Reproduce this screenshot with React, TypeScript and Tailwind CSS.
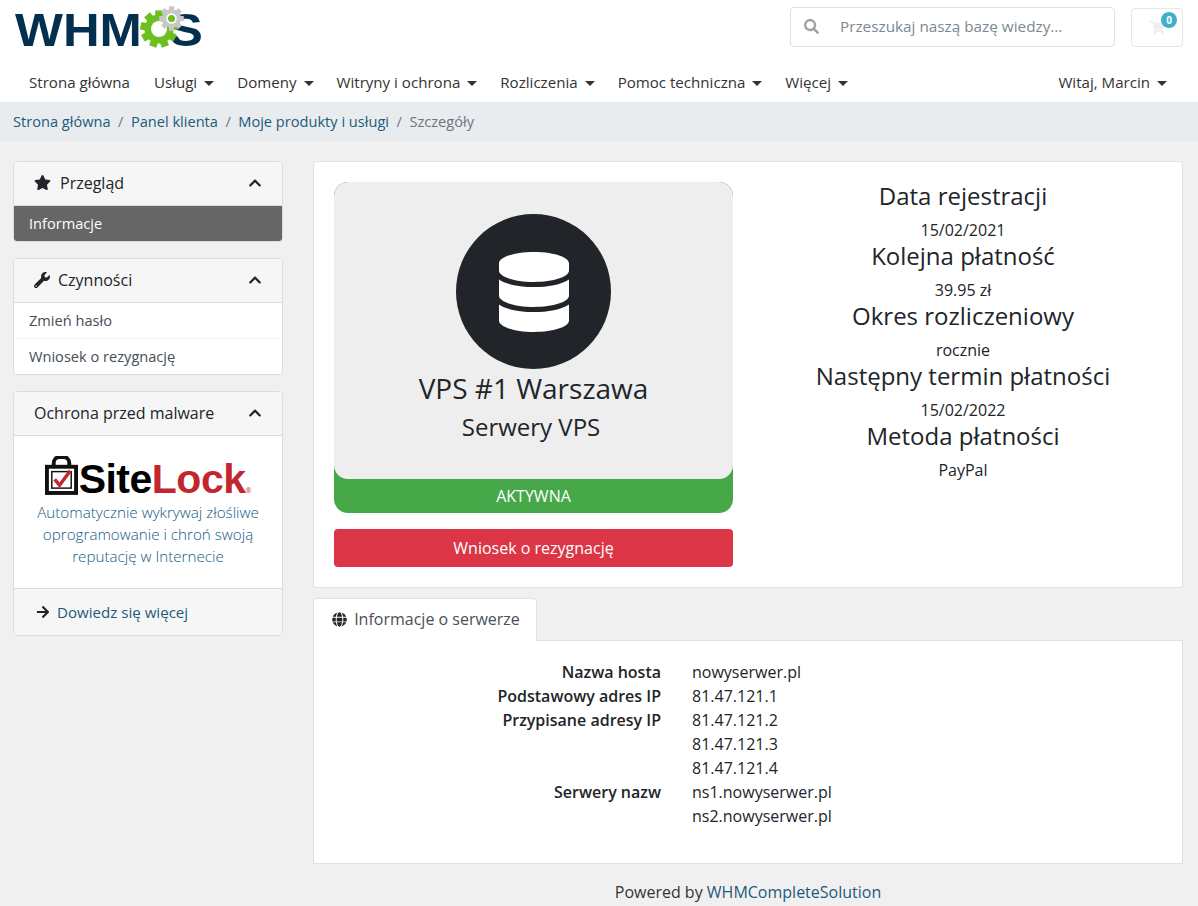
import React from "react";
import { FaStar, FaWrench, FaChevronUp, FaArrowRight, FaGlobe, FaDatabase, FaSearch, FaShoppingCart } from "react-icons/fa";

const font = { fontFamily: '"Open Sans", sans-serif' };

function Gear({ size, color, hole, teeth, className }: { size: number; color: string; hole: string; teeth: number; className?: string }) {
  const items = Array.from({ length: teeth }, (_, i) => (360 / teeth) * i);
  return (
    <svg width={size} height={size} viewBox="0 0 100 100" className={className}>
      {items.map((a) => (
        <rect key={a} x="40" y="1" width="20" height="26" fill={color} transform={`rotate(${a} 50 50)`} />
      ))}
      <circle cx="50" cy="50" r="38" fill={color} />
      <circle cx="50" cy="50" r="21" fill={hole} />
    </svg>
  );
}

function Logo() {
  return (
    <div className="relative h-[46px] w-[190px] mb-[7px] text-[#04304f] leading-none">
      <div className="flex items-center h-[46px] w-[174px] font-['Liberation_Sans'] text-[47px] font-bold scale-x-[1.08] origin-left">
        <span>WHM</span>
        <span className="ml-auto">S</span>
      </div>
      <Gear size={38} color="#6cbf1e" hole="#fff" teeth={9} className="absolute left-[125px] top-[4px]" />
      <Gear size={25} color="#c8c8c8" hole="#fff" teeth={8} className="absolute left-[144px] top-[0px]" />
      <div className="absolute left-[153px] top-[9px] w-[7px] h-[7px] rounded-full bg-[#6cbf1e]" />
    </div>
  );
}

function Caret() {
  return <span className="ml-[7px] inline-block border-x-[5px] border-t-[5px] border-x-transparent border-t-[#333] translate-y-[-2px]" />;
}

function NavItem({ label, caret = true }: { label: string; caret?: boolean }) {
  return (
    <span className={caret ? "px-2 py-2 mr-[7px] text-[#333] whitespace-nowrap" : "px-2 py-2 mr-2 text-[#333] whitespace-nowrap"}>
      {label}
      {caret && <Caret />}
    </span>
  );
}

function SideCard({ title, icon, children }: { title: string; icon?: React.ReactNode; children: React.ReactNode }) {
  return (
    <div className="mb-4 rounded-[4px] border border-[#dcdcdc] bg-white overflow-hidden">
      <div className="flex items-center h-[44px] pb-[2px] pl-[20px] pr-[20px] bg-[#f6f6f6] border-b border-[#dcdcdc] text-[16px] text-[#212529]">
        {icon}
        <span>{title}</span>
        <FaChevronUp className="ml-auto text-[14px] text-[#212529]" />
      </div>
      {children}
    </div>
  );
}

function SiteLock() {
  return (
    <div className="flex items-end justify-center h-[42px]">
      <svg width="33" height="39" viewBox="0 0 34 40" className="mr-[1px] mb-[3px]">
        <path d="M9 12V7a6 6 0 0 1 6-6h4a6 6 0 0 1 6 6v5" fill="none" stroke="#111" strokeWidth="4" />
        <rect x="2" y="11" width="30" height="27" fill="#fff" stroke="#111" strokeWidth="4" />
        <rect x="7" y="16" width="20" height="17" fill="#fff" stroke="#111" strokeWidth="1.5" />
        <path d="M10 24l5 6 11-15" fill="none" stroke="#c1272d" strokeWidth="3.5" />
      </svg>
      <span className="font-['Liberation_Sans'] font-bold text-[41px] leading-[38px] tracking-[-0.5px] text-black">Site</span>
      <span className="font-['Liberation_Sans'] font-bold text-[41px] leading-[38px] tracking-[-0.5px] text-[#c1272d]">Lock</span>
      <span className="text-[7px] leading-[10px] mb-[2px] text-[#c1272d]">®</span>
    </div>
  );
}

function Stat({ title, value }: { title: string; value: string }) {
  return (
    <div>
      <div className="text-[24px] leading-[27px] mb-[11px] text-[#212529]">{title}</div>
      <div className="text-[16px] leading-[21px] mb-[1px] text-[#212529]">{value}</div>
    </div>
  );
}

function InfoRow({ label, value }: { label?: string; value: string }) {
  return (
    <div className="flex h-[24px] items-center text-[16px]">
      <div className="w-[348px] pr-[1px] text-right font-semibold text-[#212529]">{label}</div>
      <div className="ml-[30px] text-[#212529]">{value}</div>
    </div>
  );
}

export default function App() {
  return (
    <div style={font} className="min-h-[906px] h-[906px] overflow-hidden bg-[#f0f0f0] text-[14.6px] text-[#212529]">
      <header className="bg-white">
        <div className="flex items-center h-[65px] pl-[15px] pr-[15px]">
          <Logo />
          <div className="ml-auto flex h-[40px] w-[325px] items-center rounded-[4px] border border-[#e0e0e0] bg-white pl-[13px] translate-y-[-6px]">
            <FaSearch className="text-[15px] text-[#a0a0a0]" />
            <span className="ml-[21px] text-[15.3px] text-[#7d8790]">Przeszukaj naszą bazę wiedzy...</span>
          </div>
          <div className="relative ml-[16px] flex h-[39px] w-[52px] items-center justify-center rounded-[4px] border border-[#e6e6e6] translate-y-[-5px]">
            <FaShoppingCart className="text-[15px] text-[#eeeeee]" />
            <span className="absolute right-[5px] top-[3px] flex h-[16px] w-[16px] items-center justify-center rounded-full bg-[#3fb1c6] text-[10px] font-bold text-white">0</span>
          </div>
        </div>
        <nav className="flex items-center h-[37px] pb-[3px] pl-[21px] pr-[31px] text-[15.1px]">
          <NavItem label="Strona główna" caret={false} />
          <NavItem label="Usługi" />
          <NavItem label="Domeny" />
          <NavItem label="Witryny i ochrona" />
          <NavItem label="Rozliczenia" />
          <NavItem label="Pomoc techniczna" />
          <NavItem label="Więcej" />
          <span className="ml-auto text-[#333] whitespace-nowrap">Witaj, Marcin<Caret /></span>
        </nav>
      </header>

      <div className="flex items-center h-[39px] bg-[#e9ecef] pl-[13px] text-[14.6px]">
        <span className="text-[#1e5a7c]">Strona główna</span>
        <span className="px-[7.5px] text-[#6c757d]">/</span>
        <span className="text-[#1e5a7c]">Panel klienta</span>
        <span className="px-[7.5px] text-[#6c757d]">/</span>
        <span className="text-[#1e5a7c]">Moje produkty i usługi</span>
        <span className="px-[7.5px] text-[#6c757d]">/</span>
        <span className="text-[#6c757d]">Szczegóły</span>
      </div>

      <div className="flex pl-[13px] pr-[15px] pt-[20px] gap-[30px]">
        <aside className="w-[270px] shrink-0">
          <SideCard title="Przegląd" icon={<FaStar className="mr-[9px] text-[17px] text-[#212529]" />}>
            <div className="flex items-center h-[35px] pl-[15px] text-white bg-[#666666] font-medium">Informacje</div>
          </SideCard>
          <SideCard title="Czynności" icon={<FaWrench className="mr-[8px] text-[16px] text-[#212529]" />}>
            <div className="flex items-center h-[36px] pl-[15px] text-[#444d55] border-b border-[#f3f3f3]">Zmień hasło</div>
            <div className="flex items-center h-[35px] pl-[15px] text-[#444d55]">Wniosek o rezygnację</div>
          </SideCard>
          <div className="rounded-[4px] border border-[#dcdcdc] bg-white overflow-hidden">
            <div className="flex items-center h-[44px] pb-[2px] px-[20px] bg-[#f6f6f6] border-b border-[#dcdcdc] text-[16px]">
              <span>Ochrona przed malware</span>
              <FaChevronUp className="ml-auto text-[14px]" />
            </div>
            <div className="h-[152px] pt-[20px] text-center text-[15.2px] leading-[22px] text-[#155a85]">
              <SiteLock />
              <p className="mt-[3px] px-[10px] font-light">Automatycznie wykrywaj złośliwe oprogramowanie i chroń swoją reputację w Internecie</p>
            </div>
            <div className="flex items-center h-[47px] pl-[22px] bg-[#f6f6f6] border-t border-[#dcdcdc] text-[15.1px] text-[#1e5a7c]">
              <FaArrowRight className="mr-[7px] text-[14px] text-[#212529]" />
              Dowiedz się więcej
            </div>
          </div>
        </aside>

        <main className="flex-1 min-w-0">
          <div className="flex h-[427px] rounded-[4px] border border-[#dee2e6] bg-white p-[20px]">
            <div className="w-[399px] shrink-0">
              <div className="rounded-[14px] bg-[#47a84a] overflow-hidden">
                <div className="h-[297px] rounded-[14px] bg-[#eeeeee] flex flex-col items-center pt-[32px]">
                  <div className="flex h-[155px] w-[155px] items-center justify-center rounded-full bg-[#212529]">
                    <FaDatabase className="text-[80px] text-white" />
                  </div>
                  <div className="mt-[2px] text-[28px] leading-[34px] text-[#212529]">VPS #1 Warszawa</div>
                  <div className="mt-[5px] mr-[5px] text-[24px] leading-[34px] text-[#212529]">Serwery VPS</div>
                </div>
                <div className="flex h-[34px] items-center justify-center text-[16px] font-medium text-white">AKTYWNA</div>
              </div>
              <div className="mt-[16px] flex h-[38px] items-center justify-center rounded-[4px] bg-[#dc3545] text-[16px] text-white">Wniosek o rezygnację</div>
            </div>
            <div className="flex-1 pl-[31px] text-center">
              <Stat title="Data rejestracji" value="15/02/2021" />
              <Stat title="Kolejna płatność" value="39.95 zł" />
              <Stat title="Okres rozliczeniowy" value="rocznie" />
              <Stat title="Następny termin płatności" value="15/02/2022" />
              <Stat title="Metoda płatności" value="PayPal" />
            </div>
          </div>

          <div className="mt-[10px] flex -mb-px">
            <div className="relative z-10 flex h-[43px] w-[224px] items-center justify-center rounded-t-[4px] border border-b-0 border-[#dee2e6] bg-white pb-[2px] pl-[2px] text-[16px] text-[#495057]">
              <FaGlobe className="mr-[7px] text-[15px] text-[#212529]" />
              Informacje o serwerze
            </div>
          </div>
          <div className="h-[224px] border border-[#dee2e6] bg-white pt-[19px]">
            <InfoRow label="Nazwa hosta" value="nowyserwer.pl" />
            <InfoRow label="Podstawowy adres IP" value="81.47.121.1" />
            <InfoRow label="Przypisane adresy IP" value="81.47.121.2" />
            <InfoRow value="81.47.121.3" />
            <InfoRow value="81.47.121.4" />
            <InfoRow label="Serwery nazw" value="ns1.nowyserwer.pl" />
            <InfoRow value="ns2.nowyserwer.pl" />
          </div>
          <div className="mt-[17px] text-center text-[16px] leading-[22px] text-[#333]">
            Powered by <span className="text-[#1e5a7c]">WHMCompleteSolution</span>
          </div>
        </main>
      </div>
    </div>
  );
}
